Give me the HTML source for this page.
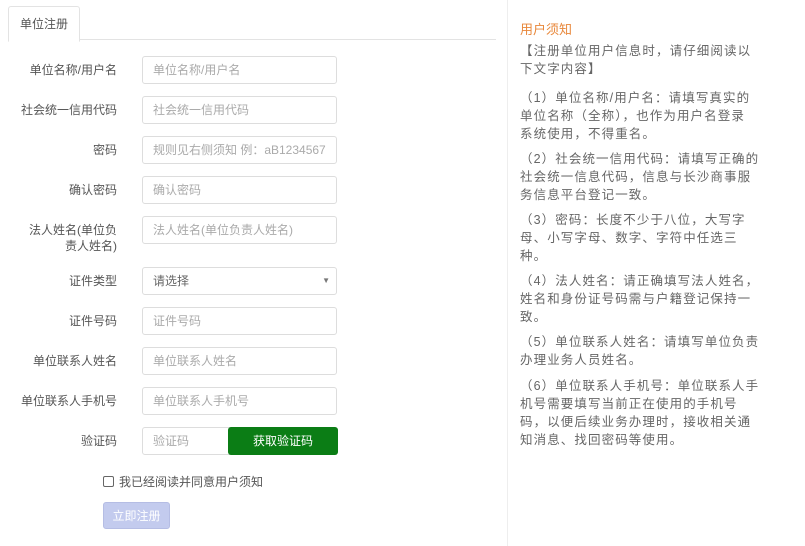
<!DOCTYPE html>
<html><head><meta charset="utf-8"><style>
body{margin:0;width:805px;height:546px;background:#fff;font-family:"Liberation Sans","Noto Sans CJK SC",sans-serif;position:relative;overflow:hidden;color:#555}
.tabline{position:absolute;left:8px;top:39px;width:488px;height:1px;background:#e3e3e3}
.tab{position:absolute;left:8px;top:6px;width:70px;height:34px;border:1px solid #e3e3e3;border-bottom:1px solid #fff;border-radius:3px 3px 0 0;background:#fff;font-size:12px;line-height:34px;text-align:center;color:#555}
.lbl{position:absolute;right:688px;font-size:12px;color:#555;text-align:right;line-height:16px}
.inp{position:absolute;left:142px;width:195px;height:28px;box-sizing:border-box;border:1px solid #ddd;border-radius:3px;font-size:12px;color:#aaa;line-height:26px;padding-left:10px;background:#fff}
.right{position:absolute;left:507px;top:0;width:298px;height:546px;background:#fff;border-left:1px solid #eee}
.rt{position:absolute;left:520px;width:280px;white-space:nowrap;font-size:12.5px;line-height:18px;color:#666;letter-spacing:1.1px}
</style></head><body>
<div class="tabline"></div>
<div class="tab">单位注册</div>

<div class="lbl" style="top:62px">单位名称/用户名</div>
<div class="inp" style="top:56px">单位名称/用户名</div>
<div class="lbl" style="top:102px">社会统一信用代码</div>
<div class="inp" style="top:96px">社会统一信用代码</div>
<div class="lbl" style="top:142px">密码</div>
<div class="inp" style="top:136px">规则见右侧须知 例：aB1234567</div>
<div class="lbl" style="top:182px">确认密码</div>
<div class="inp" style="top:176px">确认密码</div>
<div class="lbl" style="top:222px;width:90px">法人姓名(单位负责人姓名)</div>
<div class="inp" style="top:216px">法人姓名(单位负责人姓名)</div>
<div class="lbl" style="top:273px">证件类型</div>
<div class="inp" style="top:267px;color:#666">请选择<span style="position:absolute;right:6px;top:0;font-size:8px;color:#777">▼</span></div>
<div class="lbl" style="top:313px">证件号码</div>
<div class="inp" style="top:307px">证件号码</div>
<div class="lbl" style="top:353px">单位联系人姓名</div>
<div class="inp" style="top:347px">单位联系人姓名</div>
<div class="lbl" style="top:393px">单位联系人手机号</div>
<div class="inp" style="top:387px">单位联系人手机号</div>
<div class="lbl" style="top:433px">验证码</div>
<div class="inp" style="top:427px;width:100px">验证码</div>
<div style="position:absolute;left:228px;top:427px;width:110px;height:28px;background:#0b7d15;border-radius:3px;color:#fff;font-size:12px;line-height:28px;text-align:center">获取验证码</div>
<div style="position:absolute;left:103px;top:476px;width:9px;height:9px;border:1px solid #666;border-radius:2px"></div>
<div style="position:absolute;left:119px;top:473px;font-size:12px;color:#555">我已经阅读并同意用户须知</div>
<div style="position:absolute;left:103px;top:502px;width:67px;height:27px;background:#c3cbee;border:1px solid #b5bde4;border-radius:3px;color:#fff;font-size:12px;line-height:27px;text-align:center;box-sizing:border-box">立即注册</div>

<div class="right"></div>
<div class="rt" style="top:21px;color:#e8873a;font-size:13px;letter-spacing:0">用户须知</div>
<div class="rt" style="top:42px">【注册单位用户信息时，请仔细阅读以<br>下文字内容】</div>
<div class="rt" style="top:89px">（1）单位名称/用户名：请填写真实的<br>单位名称（全称），也作为用户名登录<br>系统使用，不得重名。</div>
<div class="rt" style="top:150px">（2）社会统一信用代码：请填写正确的<br>社会统一信息代码，信息与长沙商事服<br>务信息平台登记一致。</div>
<div class="rt" style="top:211px">（3）密码：长度不少于八位，大写字<br>母、小写字母、数字、字符中任选三<br>种。</div>
<div class="rt" style="top:272px">（4）法人姓名：请正确填写法人姓名，<br>姓名和身份证号码需与户籍登记保持一<br>致。</div>
<div class="rt" style="top:333px">（5）单位联系人姓名：请填写单位负责<br>办理业务人员姓名。</div>
<div class="rt" style="top:377px">（6）单位联系人手机号：单位联系人手<br>机号需要填写当前正在使用的手机号<br>码，以便后续业务办理时，接收相关通<br>知消息、找回密码等使用。</div>
</body></html>
